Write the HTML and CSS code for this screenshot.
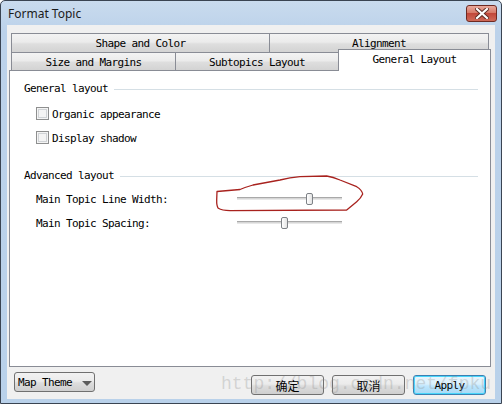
FILE: index.html
```html
<!DOCTYPE html>
<html>
<head>
<meta charset="utf-8">
<title>Format Topic</title>
<link rel="stylesheet" href="styles.css">
</head>
<body>
<div class="window">
  <div class="titlebar">
    <span class="title">Format Topic</span>
    <div class="close">
      <svg width="14" height="11" viewBox="0 0 14 11">
        <path d="M2 1 L12 10 M12 1 L2 10" stroke="#5a2a22" stroke-width="4" stroke-linecap="square"/>
        <path d="M2 1 L12 10 M12 1 L2 10" stroke="#ffffff" stroke-width="2.2" stroke-linecap="square"/>
      </svg>
    </div>
  </div>
  <div class="client">
    <div class="tabs">
      <div class="tabrow back">
        <div class="tab t-shape">Shape and Color</div>
        <div class="tab t-align">Alignment</div>
      </div>
      <div class="tabrow front">
        <div class="tab t-size">Size and Margins</div>
        <div class="tab t-sub">Subtopics Layout</div>
        <div class="tab selected">General Layout</div>
      </div>
    </div>
    <div class="panel">
      <div class="group-head"><span>General layout</span><div class="rule"></div></div>
      <div class="check-row first"><span class="checkbox"></span><span class="label">Organic appearance</span></div>
      <div class="check-row"><span class="checkbox"></span><span class="label">Display shadow</span></div>
      <div class="group-head adv"><span>Advanced layout</span><div class="rule"></div></div>
      <div class="slider-row first">
        <span class="slider-label">Main Topic Line Width:</span>
        <div class="slider"><div class="track"></div><div class="thumb" style="left:69px"></div></div>
      </div>
      <div class="slider-row">
        <span class="slider-label">Main Topic Spacing:</span>
        <div class="slider"><div class="track"></div><div class="thumb" style="left:44px"></div></div>
      </div>
    </div>
    <div class="buttonbar">
      <div class="btn theme"><span>Map Theme</span><span class="arrow"></span></div>
      <div class="spacer"></div>
      <div class="btn dlg">确定</div>
      <div class="btn dlg">取消</div>
      <div class="btn dlg apply">Apply</div>
    </div>
  </div>
  <svg class="annotation" width="502" height="404" viewBox="0 0 502 404">
    <path d="M217 191.5 L240 189.5 Q246 187 253 185 L280 180 Q290 177.5 300 176.7 L326.7 176 Q333 177 340 180 L356.7 186.7 Q362 190 362.7 194 Q361 198 356.7 201.7 L346.7 210 L230 210.7 Q222 210.5 218.3 208.3 Q216.5 206 216.7 200 Z" fill="none" stroke="#a8221e" stroke-width="1.3" stroke-linejoin="round"/>
  </svg>
  <div class="watermark">http://blog.csdn.net/fpku</div>
</div>
</body>
</html>
```
FILE: styles.css
```css
* { box-sizing: border-box; }
html, body { margin: 0; padding: 0; }
body { width: 502px; height: 404px; overflow: hidden; background: #ffffff; }

.window {
  position: relative;
  width: 502px;
  height: 404px;
  border: 1px solid #3a4452;
  border-radius: 5px 5px 0 0;
  padding: 0 6px 4px 6px;
  display: flex;
  flex-direction: column;
  background: linear-gradient(#c9dbee, #bcd2ea 30px, #b9d1ea);
}

.titlebar {
  height: 24px;
  display: flex;
  align-items: center;
  padding-left: 1px;
}
.title {
  flex: 1;
  font-family: "Noto Sans", "Open Sans", sans-serif;
  font-size: 12px;
  color: #1b1b1b;
  padding-top: 1px;
}
.close {
  width: 31px;
  height: 17px;
  margin-right: -2px;
  margin-top: 1px;
  border: 1px solid #6e2a22;
  border-radius: 3px;
  background: linear-gradient(#e9a99c, #d77a68 45%, #c2483a 50%, #cf6a58);
  display: flex;
  align-items: center;
  justify-content: center;
}

.client {
  flex: 1;
  background: #f0f0f0;
  display: flex;
  flex-direction: column;
  font-family: "DejaVu Sans Mono", "Liberation Mono", monospace;
  font-size: 11px;
  letter-spacing: -0.62px;
  color: #000;
}

.tabs {
  margin: 8px 4px 0 2px;
}
.tabrow {
  display: flex;
  margin-left: 2px;
}
.tab {
  display: flex;
  align-items: center;
  justify-content: center;
  border-left: 1px solid #898c95;
  background: linear-gradient(#f3f3f3, #ebebeb 45%, #dedede 55%, #d3d3d3);
  white-space: nowrap;
}
.back .tab {
  height: 20px;
  border-top: 1px solid #898c95;
  border-bottom: 1px solid #898c95;
  padding-top: 1px;
}
.t-shape { width: 258px; }
.t-align { width: 220px; border-right: 1px solid #898c95; }
.front { height: 17px; }
.front .tab { height: 17px; padding-top: 1px; }
.t-size { width: 164px; }
.t-sub { width: 163px; }
.tab.selected {
  width: 153px;
  height: 22px;
  margin-top: -4px;
  border-top: 1px solid #898c95;
  border-right: 1px solid #898c95;
  background: #ffffff;
  position: relative;
  z-index: 1;
  align-items: flex-start;
  padding-top: 3px;
}

.panel {
  margin: 0 4px 0 2px;
  height: 297px;
  background: #ffffff;
  border: 1px solid #898c95;
  padding-top: 10px;
  display: flex;
  flex-direction: column;
}
.group-head {
  height: 14px;
  display: flex;
  align-items: center;
  padding-left: 14px;
  padding-right: 12px;
}
.group-head .rule {
  flex: 1;
  height: 1px;
  margin-left: 6px;
  margin-top: 2px;
  background: #d5dfe5;
}
.group-head.adv { margin-top: 22px; }

.check-row {
  height: 16px;
  display: flex;
  align-items: center;
  margin-left: 26px;
  margin-top: 8px;
}
.check-row.first { margin-top: 11px; }
.checkbox {
  width: 13px;
  height: 13px;
  border: 1px solid #8e8f8f;
  background: #f4f4f4;
  box-shadow: inset 0 0 0 1px #f4f4f4, inset 0 0 0 2px #d0d3d6;
  margin-right: 2px;
  margin-top: -1px;
}
.check-row .label { padding-left: 1px; }

.slider-row {
  height: 16px;
  display: flex;
  align-items: center;
  margin-left: 26px;
  margin-top: 8px;
}
.slider-row.first { margin-top: 9px; }
.slider-label { width: 201px; white-space: nowrap; }
.slider {
  position: relative;
  width: 105px;
  height: 16px;
}
.track {
  position: absolute;
  left: 0;
  right: 0;
  top: 6px;
  height: 3px;
  border-top: 1px solid #a9a9a9;
  border-bottom: 1px solid #e8e8e8;
  background: #d6d6d6;
}
.thumb {
  position: absolute;
  top: 2px;
  width: 7px;
  height: 12px;
  border: 1px solid #7d8186;
  border-radius: 2px;
  background: linear-gradient(90deg, #ffffff, #e3e3e3);
}

.buttonbar {
  flex: 1;
  display: flex;
  align-items: flex-start;
  padding-left: 7px;
  padding-right: 9px;
}
.spacer { flex: 1; }
.btn {
  border: 1px solid #707070;
  border-radius: 3px;
  background: linear-gradient(#f2f2f2, #ebebeb 45%, #dddddd 55%, #cfcfcf);
  display: flex;
  align-items: center;
}
.btn.theme {
  width: 81px;
  height: 20px;
  margin-top: 5px;
  padding-left: 3px;
}
.arrow {
  width: 0;
  height: 0;
  margin-left: 10px;
  border-left: 5px solid transparent;
  border-right: 5px solid transparent;
  border-top: 5px solid #5c5c5c;
  margin-top: 2px;
}
.btn.dlg {
  width: 73px;
  height: 20px;
  margin-top: 8px;
  margin-left: 8px;
  justify-content: center;
  font-family: "Noto Sans CJK SC", sans-serif;
  font-size: 12px;
  letter-spacing: 0;
}
.btn.dlg.apply {
  font-family: "DejaVu Sans Mono", "Liberation Mono", monospace;
  font-size: 11px;
  letter-spacing: -0.62px;
  border-color: #3c7fb1;
  background: linear-gradient(#eaf6fd, #d9f0fc 45%, #bee6fd 55%, #a7d9f5);
  box-shadow: inset 0 0 0 1px #48d6fb;
}

.annotation {
  position: absolute;
  left: -1px;
  top: -1px;
  pointer-events: none;
}
.watermark {
  position: absolute;
  left: 220px;
  top: 372px;
  font-family: "Liberation Mono", monospace;
  font-size: 18px;
  line-height: 22px;
  color: rgba(140, 140, 140, 0.3);
  pointer-events: none;
  white-space: nowrap;
}
```
